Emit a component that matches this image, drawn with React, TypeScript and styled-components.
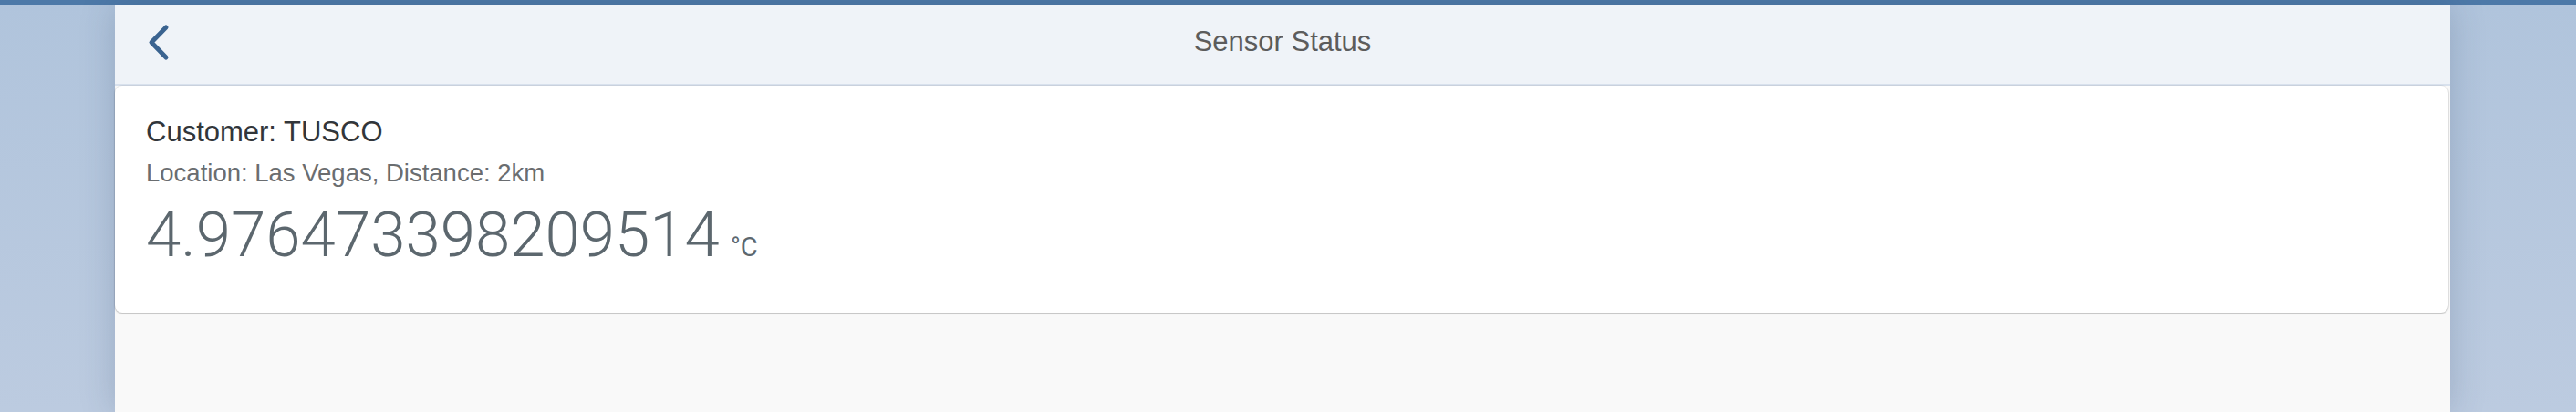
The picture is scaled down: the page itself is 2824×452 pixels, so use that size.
import React from "react";
import styled, { createGlobalStyle } from "styled-components";

const Global = createGlobalStyle`
  html, body { margin: 0; padding: 0; }
  body { font-family: "Liberation Sans", Arial, sans-serif; }
  #root { min-height: 100vh; }
`;

const Page = styled.div`
  min-height: 100vh;
  display: flex;
  flex-direction: column;
  background: linear-gradient(180deg, #b0c4dc 0%, #bccbe0 100%);
`;

const TopBar = styled.div`
  height: 6px;
  flex: none;
  background: #4d79a8;
`;

const Shell = styled.div`
  flex: 1;
  width: 2560px;
  margin-left: 126px;
  display: flex;
  flex-direction: column;
  background: #f9f9f9;
  box-shadow: 0 0 36px rgba(40, 62, 96, 0.22);
`;

const Header = styled.header`
  height: 86px;
  flex: none;
  display: grid;
  grid-template-columns: 1fr auto 1fr;
  align-items: center;
  background: #eff3f8;
  border-bottom: 2px solid #d8e1ed;
`;

const BackButton = styled.button`
  justify-self: start;
  margin: 0 0 4px 34px;
  padding: 0;
  border: 0;
  background: transparent;
  width: 26px;
  height: 42px;
  display: flex;
  cursor: pointer;
`;

const Title = styled.h1`
  margin: 0 0 8px;
  font-family: "Liberation Sans", Arial, sans-serif;
  font-weight: 400;
  font-size: 31px;
  line-height: 31px;
  color: #5c5c5c;
`;

const Content = styled.main`
  display: flex;
  flex-direction: column;
`;

const Card = styled.section`
  background: #ffffff;
  border-radius: 8px;
  margin-right: 2px;
  padding: 33px 34px 47px;
  box-shadow: 0 0 0 1px rgba(0, 0, 0, 0.06), 0 1px 2px rgba(0, 0, 0, 0.2);
  display: flex;
  flex-direction: column;
`;

const Heading = styled.div`
  font-size: 31px;
  line-height: 36px;
  color: #32363a;
`;

const Sub = styled.div`
  margin-top: 11px;
  font-size: 27.5px;
  line-height: 32px;
  color: #6a6d70;
`;

const NumberRow = styled.div`
  margin-top: 14px;
  font-family: Roboto, "Liberation Sans", sans-serif;
  font-weight: 300;
  font-size: 69px;
  line-height: 76px;
  color: #5c676e;
  white-space: nowrap;
`;

const Unit = styled.span`
  margin-left: 12px;
  font-size: 29px;
  line-height: 1;
  font-weight: 400;
  color: #5c676e;
`;

export default function App() {
  return (
    <>
      <Global />
      <Page>
        <TopBar />
        <Shell>
          <Header>
            <BackButton aria-label="Back">
              <svg width="26" height="42" viewBox="0 0 26 42" fill="none">
                <polyline
                  points="22,4 6,20.5 22,37"
                  stroke="#3a6390"
                  strokeWidth="5"
                  strokeLinecap="round"
                  strokeLinejoin="round"
                />
              </svg>
            </BackButton>
            <Title>Sensor Status</Title>
            <span />
          </Header>
          <Content>
            <Card>
              <Heading>Customer: TUSCO</Heading>
              <Sub>Location: Las Vegas, Distance: 2km</Sub>
              <NumberRow>
                4.976473398209514<Unit>°C</Unit>
              </NumberRow>
            </Card>
          </Content>
        </Shell>
      </Page>
    </>
  );
}
